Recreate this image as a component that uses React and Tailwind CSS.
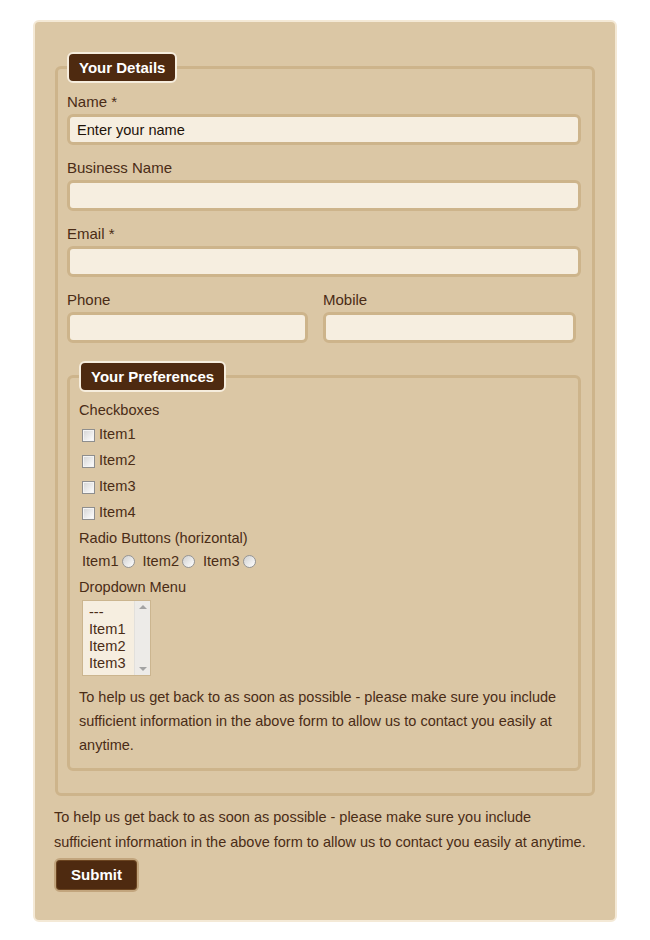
import React from "react";

const labelCls = "block h-[19px] leading-[19px] mb-[3px] text-[15px]";
const inputCls =
  "block h-[31px] bg-[#f6eee0] border-[3px] border-[#cdb48b] rounded-[6px] px-[7px] text-[14.6px] text-[#1e1208] outline-none";

const Legend = ({ children }) => (
  <legend className="h-[31px] px-[10px] bg-[#4e2a10] border-2 border-[#f6eddd] rounded-[6px] text-white font-bold text-[15px] leading-[27px]">
    {children}
  </legend>
);

const Checkbox = ({ label }) => (
  <div className="h-[26px] flex items-center pl-[3px]">
    <span className="w-[13px] h-[13px] border border-[#8e8e8e] bg-linear-to-br from-[#d4d4d4] to-white shadow-[inset_0_0_0_1px_#f4f4f4]" />
    <span className="ml-[4px]">{label}</span>
  </div>
);

const Radio = ({ label }) => (
  <span className="flex items-center mr-[8px]">
    <span>{label}</span>
    <span className="ml-[3px] w-[13px] h-[13px] rounded-full border border-[#959595] bg-linear-to-br from-[#d0d0d0] to-white" />
  </span>
);

const Field = ({ label, placeholder, className = "w-[514px]" }) => (
  <div>
    <label className={labelCls}>{label}</label>
    <input
      type="text"
      defaultValue={placeholder}
      className={`${inputCls} ${className}`}
    />
  </div>
);

const note =
  "To help us get back to as soon as possible - please make sure you include sufficient information in the above form to allow us to contact you easily at anytime.";

export default function App() {
  return (
    <div className="bg-white min-h-[940px] pt-[20px] pl-[33px] font-['Liberation_Sans',Arial,sans-serif] text-[14.6px] text-[#4a2c16]">
      <form className="w-[584px] bg-[#dbc7a5] border-2 border-[#f4e9d6] rounded-[6px] px-[20px] pt-[30px] pb-[28px]">
        <fieldset className="border-[3px] border-[#cdb48b] rounded-[6px] pl-[9px] pr-[10px] pb-[22px]">
          <Legend>Your Details</Legend>
          <div className="pt-[9px] flex flex-col gap-[13px]">
            <Field label="Name *" placeholder="Enter your name" />
            <Field label="Business Name" />
            <Field label="Email *" />
            <div className="flex gap-[15px]">
              <Field label="Phone" className="w-[241px]" />
              <Field label="Mobile" className="w-[253px]" />
            </div>
          </div>

          <fieldset className="mt-[18px] w-[514px] border-[3px] border-[#cdb48b] rounded-[6px] pl-[9px] pr-[10px] pb-[11px]">
            <Legend>Your Preferences</Legend>
            <div className="pt-[6px]">
              <div className="h-[24px] leading-[24px]">Checkboxes</div>
              <Checkbox label="Item1" />
              <Checkbox label="Item2" />
              <Checkbox label="Item3" />
              <Checkbox label="Item4" />
              <div className="h-[24px] leading-[24px]">Radio Buttons (horizontal)</div>
              <div className="h-[24px] flex items-center pl-[3px]">
                <Radio label="Item1" />
                <Radio label="Item2" />
                <Radio label="Item3" />
              </div>
              <div className="h-[26px] leading-[26px]">Dropdown Menu</div>
              <div className="ml-[3px] w-[69px] h-[76px] flex border border-[#cbb58f] bg-[#f6eee0]">
                <div className="flex-1 pl-[6px] pt-[3px] leading-[17px] text-[#4a2c16]">
                  <div>---</div>
                  <div>Item1</div>
                  <div>Item2</div>
                  <div>Item3</div>
                </div>
                <div className="w-[16px] bg-[#edebe8] border-l border-[#e2e0dc] flex flex-col items-center justify-between py-[4px]">
                  <span className="w-0 h-0 border-x-[4px] border-x-transparent border-b-[4px] border-b-[#a3a3a3]" />
                  <span className="w-0 h-0 border-x-[4px] border-x-transparent border-t-[4px] border-t-[#a3a3a3]" />
                </div>
              </div>
              <p className="mt-[9px] leading-[24px] text-[14.5px]">{note}</p>
            </div>
          </fieldset>
        </fieldset>

        <p className="mt-[9px] -ml-[1px] leading-[25px] text-[14.5px]">
          To help us get back to as soon as possible - please make sure you include
          <br />
          sufficient information in the above form to allow us to contact you easily at anytime.
        </p>
        <button
          type="submit"
          className="mt-[3px] -ml-[1px] w-[85px] h-[34px] rounded-[6px] bg-[#4e2a10] border-2 border-[#c2a57d] shadow-[inset_0_0_0_1px_#6b4420] text-white font-bold text-[15px]"
        >
          Submit
        </button>
      </form>
    </div>
  );
}
